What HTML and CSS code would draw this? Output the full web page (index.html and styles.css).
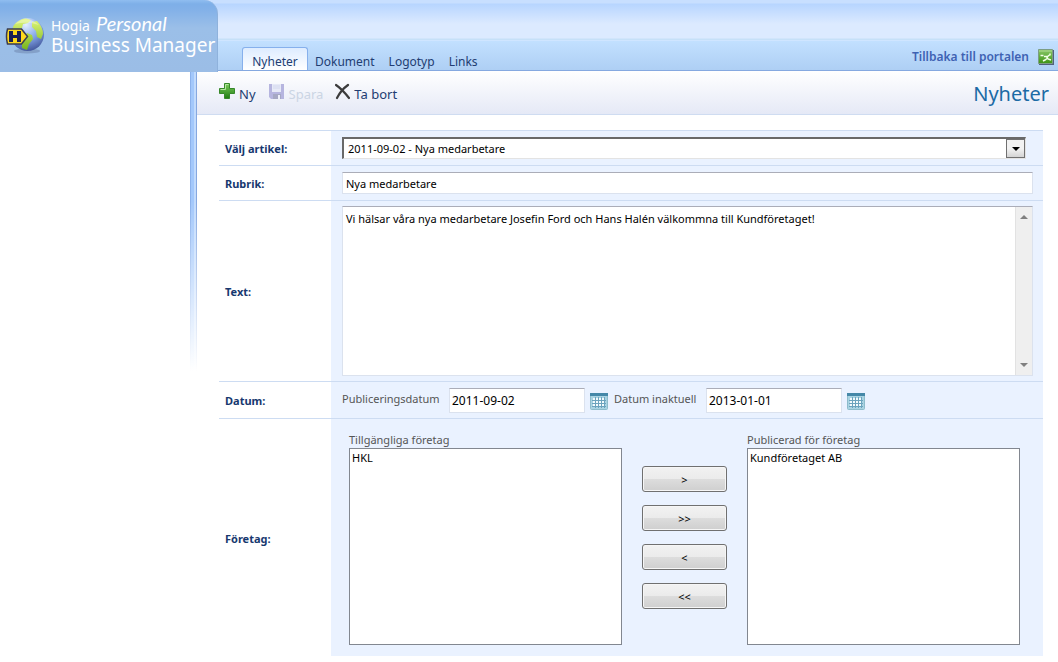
FILE: index.html
```html
<!DOCTYPE html>
<html lang="sv">
<head>
<meta charset="utf-8">
<title>Hogia Personal Business Manager</title>
<link rel="stylesheet" href="styles.css">
</head>
<body>
<svg class="defs" aria-hidden="true">
  <defs>
    <linearGradient id="plusFill" x1="0" y1="0" x2="0" y2="1"><stop offset="0" stop-color="#7ccb5c"/><stop offset="1" stop-color="#1f7d12"/></linearGradient>
    <linearGradient id="exitFill" x1="0" y1="0" x2="0" y2="1"><stop offset="0" stop-color="#8bc86a"/><stop offset="1" stop-color="#3c9414"/></linearGradient>
    <radialGradient id="globeFill" cx=".45" cy=".2" r=".85"><stop offset="0" stop-color="#e4f0ff"/><stop offset=".5" stop-color="#86a8ea"/><stop offset="1" stop-color="#3c4f94"/></radialGradient>
    <linearGradient id="landFill" x1="0" y1="0" x2="0" y2="1"><stop offset="0" stop-color="#e2f77a"/><stop offset="1" stop-color="#76b41c"/></linearGradient>
    <symbol id="calendar" viewBox="0 0 18 17">
      <rect x=".5" y=".5" width="17" height="16" rx="1" fill="#a9d3e2" stroke="#8dbccb"/>
      <path d="M0 0h18v3H0z" fill="#4588a8"/>
      <path d="M3 5h12v9H3z" fill="#f2fafc"/>
      <path d="M2 7.500h14M2 10.500h14M2 13.500h14M5.500 4v11M8.500 4v11M11.500 4v11M14.500 4v11" stroke="#6ba3bd" fill="none"/>
    </symbol>
  </defs>
</svg>
<header class="header">
  <div class="banner"></div>
  <div class="navbar">
    <nav class="tabs">
      <a class="tab tab-active" href="#nyheter">Nyheter</a>
      <a class="tab" href="#dokument">Dokument</a>
      <a class="tab" href="#logotyp">Logotyp</a>
      <a class="tab" href="#links">Links</a>
    </nav>
    <a class="portal" href="#portal">Tillbaka till portalen
      <svg width="16" height="16" viewBox="0 0 16 16" aria-hidden="true"><path d="M1 1h15v15H1z" fill="#51617c"/><path d="M.5.500h14v14H.5z" fill="url(#exitFill)" stroke="#7c9d83"/><path d="M1 1h13v2H1z" fill="#a7d58a" opacity=".6"/><path d="M2.500 6.500h3M6 7.500h3.500l2-1.500M8.500 7.500l1.500 2.500 3 1M9 9.500l-2 1.500-2 1M12 4.500v2" fill="none" stroke="#f3ffe9" stroke-width="1.500"/></svg>
    </a>
  </div>
  <div class="brand">
    <svg class="globe" width="40" height="39" viewBox="0 0 40 39" aria-hidden="true">
      <ellipse cx="22" cy="36" rx="13" ry="2.500" fill="#60739c" opacity=".4"/>
      <circle cx="22.500" cy="19.500" r="16.500" fill="url(#globeFill)"/>
      <path d="M9 10Q14 4 21 3.500L26 5l-3 3-5 1-1 4-5 2-4 0Q7 12 9 10ZM27 7l5-1q6 6 6 13l-2 5-4-2-1-6-4-4ZM22 18l5 2 1 4-4 5-2 6-5-2 0-6Z" fill="url(#landFill)"/>
      <path d="M10 9Q21-1 34 10 22 6 10 9Z" fill="#fff" opacity=".35"/>
      <path d="M2.500 14h14l6 7.500-6 7.500h-14q-2-7.500 0-15Z" fill="#ffd91c" stroke="#3a3c50" stroke-width="1.500"/>
      <path d="M4 16h4v4h4v-4h4v11h-4v-4H8v4H4Z" fill="#1b2053"/>
    </svg>
    <div class="brand-name">
      <div class="brand-top"><span>Hogia</span><em class="brand-script">Personal</em></div>
      <div class="brand-main">Business Manager</div>
    </div>
  </div>
</header>
<main class="page">
  <div class="toolbar">
    <div class="actions">
      <button class="action" type="button"><svg width="17" height="17" viewBox="0 0 17 17" aria-hidden="true"><path d="M6.500.500h5v5h5v5h-5v5h-5v-5h-5v-5h5z" fill="url(#plusFill)" stroke="#37882a"/><path d="M7.500 1.500h3M2.500 6.500h5v-5" fill="none" stroke="#b4e6a0"/></svg><span>Ny</span></button>
      <button class="action" type="button" disabled><svg width="17" height="17" viewBox="0 0 17 17" aria-hidden="true"><path d="M1 1h15v15H3l-2-2z" fill="#b6b5df"/><path d="M4 1h9v8H4z" fill="#e7eaf7"/><path d="M5 3h7M5 5h7" stroke="#d3d8ee"/><path d="M5 11h8v5H5z" fill="#a6a8c4"/><path d="M10 12h2v4h-2z" fill="#eef0fa"/></svg><span>Spara</span></button>
      <button class="action" type="button"><svg width="15" height="17" viewBox="0 0 15 17" aria-hidden="true"><path d="M1 2Q7 6 14 15M13 2Q6 7 2 15" fill="none" stroke="#3c3c3c" stroke-width="2.200" stroke-linecap="round"/></svg><span>Ta bort</span></button>
    </div>
    <h1 class="title">Nyheter</h1>
  </div>
  <form class="form">
    <div class="row">
      <label class="row-label" for="artikel">Välj artikel:</label>
      <div class="cell">
        <div class="picker">
          <select class="picker-select" id="artikel"><option>2011-09-02 - Nya medarbetare</option></select>
          <span class="picker-arrow" aria-hidden="true"><svg width="8" height="4" viewBox="0 0 8 4"><path d="M0 0h8L4 4z" fill="#000"/></svg></span>
        </div>
      </div>
    </div>
    <div class="row">
      <label class="row-label" for="rubrik">Rubrik:</label>
      <div class="cell"><input class="field" id="rubrik" type="text" value="Nya medarbetare"></div>
    </div>
    <div class="row">
      <label class="row-label" for="text">Text:</label>
      <div class="cell">
        <div class="editor">
          <textarea class="field editor-text" id="text">Vi hälsar våra nya medarbetare Josefin Ford och Hans Halén välkommna till Kundföretaget!</textarea>
          <div class="scrollbar" aria-hidden="true">
            <svg width="8" height="4" viewBox="0 0 8 4"><path d="M0 4h8L4 0z" fill="#808080"/></svg>
            <svg width="8" height="4" viewBox="0 0 8 4"><path d="M0 0h8L4 4z" fill="#808080"/></svg>
          </div>
        </div>
      </div>
    </div>
    <div class="row">
      <label class="row-label" for="publicering">Datum:</label>
      <div class="cell dates">
        <label class="hint" for="publicering">Publiceringsdatum</label>
        <input class="field date" id="publicering" type="text" value="2011-09-02">
        <button class="cal" type="button" aria-label="Välj publiceringsdatum"><svg width="18" height="17"><use href="#calendar"/></svg></button>
        <label class="hint hint-second" for="inaktuell">Datum inaktuell</label>
        <input class="field date" id="inaktuell" type="text" value="2013-01-01">
        <button class="cal" type="button" aria-label="Välj datum inaktuell"><svg width="18" height="17"><use href="#calendar"/></svg></button>
      </div>
    </div>
    <div class="row">
      <label class="row-label" for="tillgangliga">Företag:</label>
      <div class="cell companies">
        <div class="listbox">
          <label class="list-label" for="tillgangliga">Tillgängliga företag</label>
          <select class="list" id="tillgangliga" size="8" multiple><option>HKL</option></select>
        </div>
        <div class="movers">
          <button class="mover" type="button">&gt;</button>
          <button class="mover" type="button">&gt;&gt;</button>
          <button class="mover" type="button">&lt;</button>
          <button class="mover" type="button">&lt;&lt;</button>
        </div>
        <div class="listbox">
          <label class="list-label" for="publicerad">Publicerad för företag</label>
          <select class="list" id="publicerad" size="8" multiple><option>Kundföretaget AB</option></select>
        </div>
      </div>
    </div>
  </form>
</main>
</body>
</html>
```
FILE: styles.css
```css
* { box-sizing: border-box; }

body {
  margin: 0;
  background: #fff;
  color: #000;
  font: 12px/16px "Noto Sans", "Open Sans", sans-serif;
}

button, input, select, textarea { font: inherit; color: inherit; }
a { text-decoration: none; }
svg { display: block; flex: none; }
.defs { position: absolute; width: 0; height: 0; }

/* Header */
.header { position: relative; }
.banner {
  height: 40px;
  background: linear-gradient(#c8dfff 0, #c8dfff 3px, #b7d5ff 4px, #dceaff 24px, #dceaff 38px, #c6e0f8 39px);
}
.navbar {
  display: flex;
  justify-content: space-between;
  align-items: flex-end;
  height: 31px;
  padding: 0 4px 0 242px;
  border-top: 1px solid #cfe5ff;
  border-bottom: 1px solid #85a9e0;
  background: linear-gradient(#c2e0ff, #aecff4);
}
.tabs { display: flex; }
.tab {
  height: 23px;
  padding: 6px 7px 0;
  border-top: 1px solid transparent;
  color: #223d72;
}
.tab-active {
  width: 66px;
  padding: 6px 0 0;
  border: 1px solid #86b0ec;
  border-bottom: 0;
  border-radius: 3px 3px 0 0;
  background: linear-gradient(#deecff, #fff);
  text-align: center;
}
.portal {
  display: flex;
  align-items: center;
  gap: 9px;
  height: 26px;
  color: #3e62b3;
  font-weight: 600;
}
.brand {
  position: absolute;
  top: 0;
  left: 0;
  display: flex;
  width: 218px;
  height: 72px;
  padding: 15px 0 0 5px;
  border-right: 1px solid #8fb2dc;
  border-radius: 0 14px 0 0;
  background: linear-gradient(#90bdf0 0, #7eafe8 4px, #83b1e8 10px, #9bbfe8 28px, #9bbde6 100%);
  color: #fff;
}
.brand-name { padding-left: 6px; white-space: nowrap; }
.brand-top { display: flex; align-items: baseline; gap: 6px; height: 18px; font-size: 14px; line-height: 16px; }
.brand-script { font-family: Lato, sans-serif; font-size: 20px; }
.brand-main { font-size: 19px; line-height: 24px; }

/* Page with the fading stripe along its left edge */
.page {
  margin-left: 190px;
  padding-left: 7px;
  background:
    linear-gradient(transparent 130px, #fff 300px) 0 0 / 7px 310px no-repeat,
    linear-gradient(90deg, #8cb2ec 0 1px, #a3c8fb 1px 4px, #c2dbfc 4px 6px, #86a8e0 6px) 0 0 / 7px 300px no-repeat;
}
.toolbar {
  display: flex;
  justify-content: space-between;
  align-items: center;
  height: 44px;
  padding: 0 9px 0 21px;
  border-bottom: 1px solid #cfdcf1;
  background: linear-gradient(#fff, #e5e9f6);
}
.actions { display: flex; gap: 12px; padding-top: 3px; }
.action {
  display: flex;
  gap: 4px;
  height: 22px;
  padding: 0;
  border: 0;
  background: none;
  color: #223d72;
  font-size: 13px;
}
.action span { padding-top: 3px; }
.action:disabled { color: #cbd5e4; }
.title { margin: 0; padding-top: 2px; color: #1c6ba5; font-size: 20px; line-height: 28px; font-weight: 400; }

/* Form */
.form { margin: 15px 15px 0 22px; }
.row {
  display: grid;
  grid-template-columns: 112px minmax(0, 1fr);
  border-top: 1px solid #cddcf2;
}
.row-label {
  display: flex;
  align-items: center;
  padding: 2px 6px 0;
  color: #17386f;
  font-size: 11px;
  font-weight: 700;
}
.cell { padding: 6px 10px 6px 11px; background: #eaf2ff; font-size: 11px; }
.field {
  display: block;
  width: 100%;
  height: 22px;
  padding: 0 3px;
  border: 1px solid #dbe2ee;
  border-top-color: #abadb8;
  background: #fff;
}
.picker { position: relative; height: 22px; margin-right: 7px; }
.picker-select {
  appearance: none;
  width: 100%;
  height: 22px;
  padding: 0 24px 0 4px;
  border: 2px solid #696969;
  border-right: 1px solid #e3e3e3;
  border-bottom: 1px solid #e3e3e3;
  border-radius: 0;
  background: #fff;
}
.picker-arrow {
  position: absolute;
  top: 2px;
  right: 1px;
  display: grid;
  place-items: center;
  width: 19px;
  height: 19px;
  border: 1px solid #707070;
  background: linear-gradient(#f2f2f2 50%, #d4d4d4);
  pointer-events: none;
}
.editor { position: relative; height: 170px; margin: -1px 0; }
.editor-text { height: 100%; padding: 4px 20px 4px 3px; resize: none; overflow: hidden; }
.scrollbar {
  position: absolute;
  top: 1px;
  right: 1px;
  bottom: 1px;
  display: flex;
  flex-direction: column;
  align-items: center;
  justify-content: space-between;
  width: 17px;
  padding: 8px 0;
  border-left: 1px solid #e2e2e2;
  background: #efefef;
}
.dates { display: flex; padding-bottom: 5px; }
.hint { width: 107px; padding-top: 3px; color: #555; }
.hint-second { width: 92px; }
.date { width: 136px; height: 25px; padding: 0 2px; font-size: 12px; }
.cal { align-self: center; margin: 2px 6px 0 5px; padding: 0; border: 0; background: none; }
.companies { display: flex; gap: 20px; padding: 13px 18px 11px; }
.listbox { display: flex; flex-direction: column; flex: 0 1 273px; }
.list-label { color: #555; }
.list {
  width: 100%;
  height: 197px;
  padding: 0;
  border: 1px solid #828790;
  border-radius: 0;
  background: #fff;
  overflow: hidden;
}
.list option { padding: 1px 2px; }
.movers { display: flex; flex-direction: column; gap: 13px; padding-top: 34px; }
.mover {
  width: 85px;
  height: 26px;
  padding: 2px 0 0;
  border: 1px solid #707070;
  border-radius: 3px;
  background: linear-gradient(#f2f2f2, #ebebeb 50%, #dddddd 50%, #cfcfcf);
  box-shadow: inset 0 0 0 1px #f6f6f6;
}
```
